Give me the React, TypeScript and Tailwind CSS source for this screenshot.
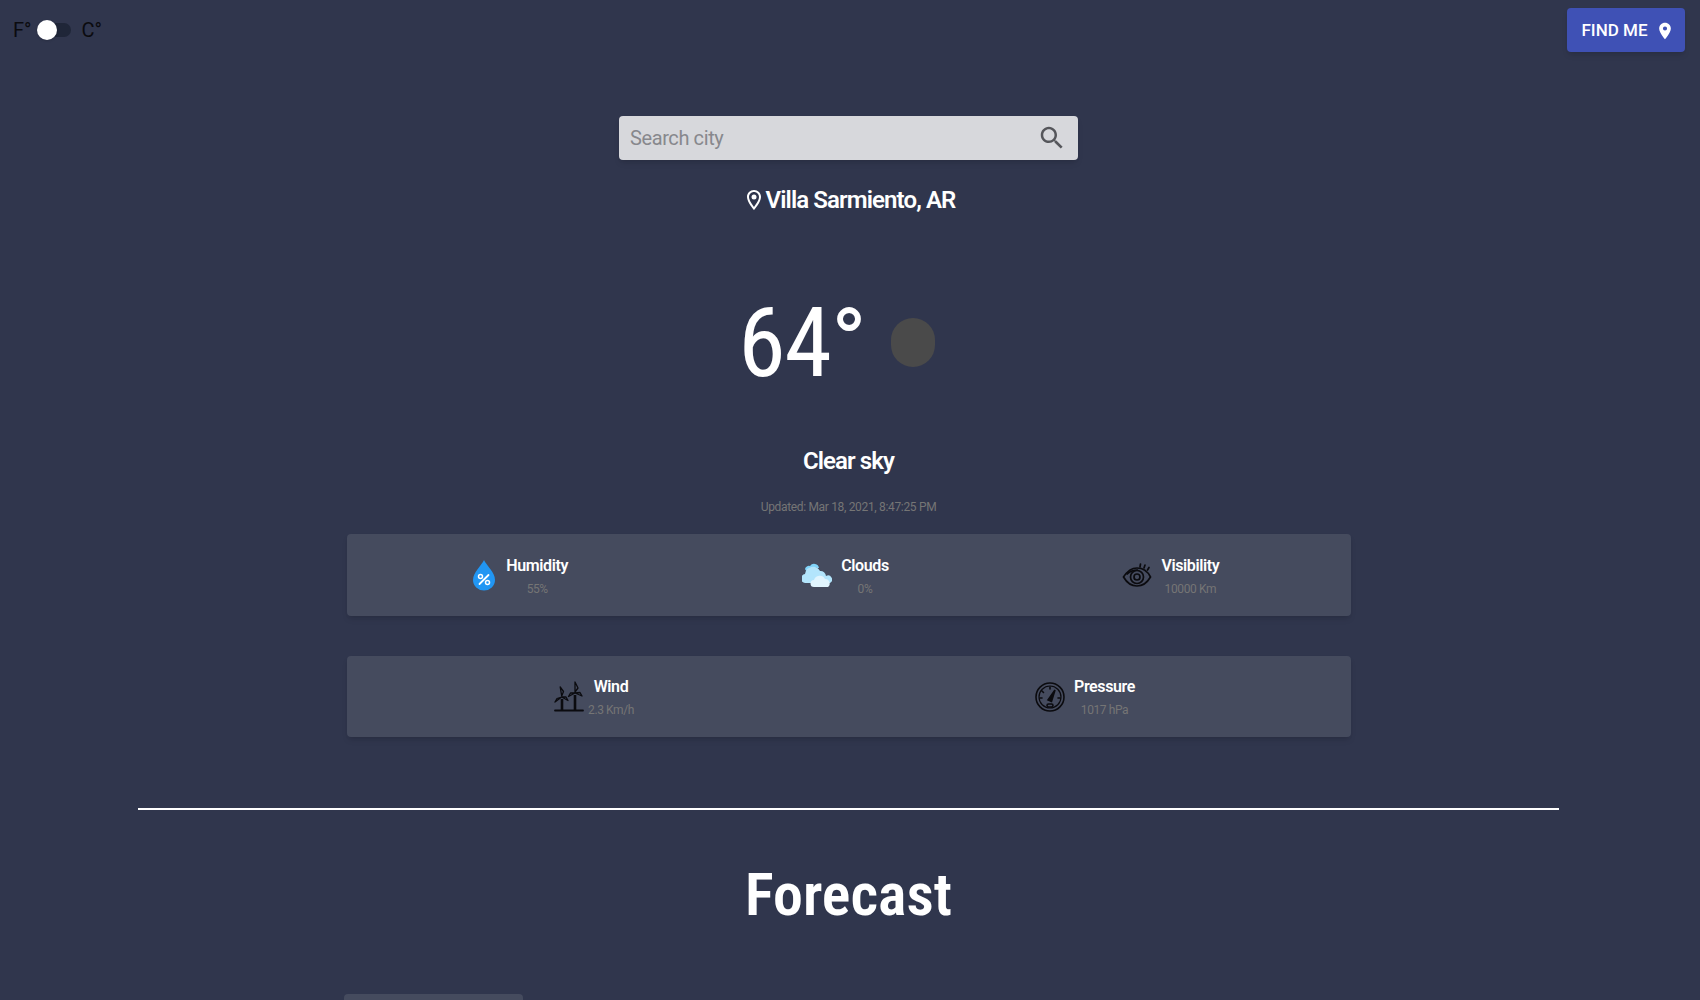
import type { ReactNode } from "react";

function DropIcon() {
  return (
    <svg viewBox="0 0 24 32" className="h-8 w-6">
      <path d="M12 1 C14 6 23 13 23 21 A11 10.5 0 0 1 1 21 C1 13 10 6 12 1Z" fill="#2196f3" />
      <path d="M7.5 25 L16.5 16" stroke="#fff" strokeWidth="1.8" strokeLinecap="round" />
      <circle cx="8.5" cy="17.5" r="2" fill="none" stroke="#fff" strokeWidth="1.5" />
      <circle cx="15.5" cy="23.5" r="2" fill="none" stroke="#fff" strokeWidth="1.5" />
    </svg>
  );
}

function CloudIcon() {
  return (
    <svg viewBox="0 0 30 28" className="h-7 w-[30px]">
      <path d="M3 8 a4 4 0 0 1 5-3 a5 5 0 0 1 9 2 h-2 a5 5 0 0 0-8 3 H5 a2.5 2.5 0 0 1-2-2Z" fill="#81d4fa" />
      <path d="M4 22 a4.5 4.5 0 0 1-1-9 a8 8 0 0 1 15-3 a5.5 5.5 0 0 1 6 5 a4 4 0 0 1 4 7Z" fill="#b3e5fc" />
      <path d="M12 26 a3.5 3.5 0 0 1 0-7 a6 6 0 0 1 11-1 a4.5 4.5 0 0 1 3 8Z" fill="#e1f5fe" />
    </svg>
  );
}

function EyeIcon() {
  return (
    <svg viewBox="0 0 30 28" className="h-7 w-[30px]" fill="none" stroke="#0b0b0f" strokeWidth="1.7" strokeLinecap="round">
      <path d="M1.5 16 C6 9 11 7 15 7 C20 7 25 9 28.5 16 C25 22 20 25 15 25 C10 25 5 22 1.5 16Z" />
      <path d="M5 13 C9 9.5 12 9 15.5 9" />
      <circle cx="15" cy="16" r="6.5" />
      <circle cx="15" cy="16" r="3" />
      <path d="M18 6 L18.5 3 M22 7 L23 4 M25.5 9 L27 6.5" />
    </svg>
  );
}

function WindIcon() {
  return (
    <svg viewBox="0 0 30 32" className="h-8 w-[30px]" fill="none" stroke="#0b0b0f" strokeWidth="1.3" strokeLinejoin="round" strokeLinecap="round">
      <path d="M1 29.5 H29" strokeWidth="1.8" />
      <path d="M8 29 V18 M21 29 V14" strokeWidth="2.6" strokeLinecap="butt" />
      <path d="M7.7 15 L6.2 6 L9.5 10.5 Z M7.7 16 L1 21 L3 17.5 Z M7.7 16 L14 19.5 L12 16 Z" />
      <path d="M21 11 L21 1 L24 7 Z M21 12 L14.5 15.5 L16.5 12 Z M21 12 L28 15 L26 11.5 Z" />
    </svg>
  );
}

function GaugeIcon() {
  return (
    <svg viewBox="0 0 30 30" className="h-[30px] w-[30px]" fill="none" stroke="#0b0b0f" strokeWidth="1.6" strokeLinecap="round">
      <circle cx="15" cy="15" r="14" />
      <circle cx="15" cy="15" r="11" strokeWidth="1.2" />
      <path d="M13 18 L20 8 L16.5 19.5 Z" fill="#0b0b0f" />
      <rect x="12" y="22" width="6" height="3" rx="1.5" />
      <path d="M15 5 V7 M7 9 L8.5 10.5 M5 16 H7 M25 16 H23" />
    </svg>
  );
}

function Stat({ icon, label, value, gap }: { icon: ReactNode; label: string; value: string; gap: string }) {
  return (
    <div className={`flex items-center justify-center ${gap}`}>
      {icon}
      <div className="flex flex-col items-center pt-[1px] tracking-[-0.4px]">
        <span className="text-[16px] font-semibold leading-[24px] text-white">{label}</span>
        <span className="mt-[2px] text-[12px] leading-[18px] text-[#757575]">{value}</span>
      </div>
    </div>
  );
}

export default function App() {
  return (
    <div className="h-screen overflow-hidden bg-[#30364d] font-['Roboto',sans-serif] text-white">
      <div className="flex items-start justify-between pl-[13px] pr-[15px] pt-2">
        <div className="flex items-center pt-[10px] text-[20px] leading-[24px] text-[#0b0b0f] [font-stretch:88%]">
          <span>F°</span>
          <span className="relative ml-[5px] mr-[11px] block h-[14px] w-[34px] rounded-full bg-[#1f2638]">
            <span className="absolute left-0 top-[-3px] h-5 w-5 rounded-full bg-white shadow" />
          </span>
          <span>C°</span>
        </div>
        <button className="flex h-11 w-[118px] items-center justify-center gap-[7px] rounded bg-[#3f51b5] pl-[4px] pt-[1px] text-[17px] font-medium text-white shadow-md">
          FIND ME
          <svg viewBox="0 0 24 24" className="h-[20px] w-[20px]" fill="#fff">
            <path d="M12 2C8.13 2 5 5.13 5 9c0 5.25 7 13 7 13s7-7.75 7-13c0-3.87-3.13-7-7-7zm0 9.5a2.5 2.5 0 1 1 0-5 2.5 2.5 0 0 1 0 5z" />
          </svg>
        </button>
      </div>

      <div className="pr-[3px]">
        <div className="mx-auto mt-[64px] flex h-11 w-[459px] items-center justify-between rounded bg-[#d7d8dc] pl-[11px] pr-[11px] shadow-md">
          <span className="text-[20px] tracking-[-0.4px] text-[#87888d]">Search city</span>
          <svg viewBox="0 0 24 24" className="h-[30px] w-[30px]" fill="#55565b">
            <path d="M15.5 14h-.79l-.28-.27C15.41 12.59 16 11.11 16 9.5 16 5.91 13.09 3 9.5 3S3 5.91 3 9.5 5.91 16 9.5 16c1.61 0 3.09-.59 4.23-1.57l.27.28v.79l5 4.99L20.49 19l-4.99-5zm-6 0C7.01 14 5 11.99 5 9.5S7.01 5 9.5 5 14 7.01 14 9.5 11.99 14 9.5 14z" />
          </svg>
        </div>

        <div className="mt-[24px] flex items-center justify-center text-[24px] font-semibold leading-[32px] tracking-[-0.9px]">
          <svg viewBox="0 0 24 24" className="h-6 w-6" fill="#fff">
            <path d="M12 2C8.13 2 5 5.13 5 9c0 5.25 7 13 7 13s7-7.75 7-13c0-3.87-3.13-7-7-7zM7 9c0-2.76 2.24-5 5-5s5 2.24 5 5c0 2.88-2.88 7.19-5 9.88C9.92 16.21 7 11.85 7 9z" />
            <circle cx="12" cy="9" r="2.5" />
          </svg>
          Villa Sarmiento, AR
        </div>

        <div className="mt-[71px] flex items-center justify-center gap-[25px] pr-[24px]">
          <span className="text-[96px] font-normal leading-[112px] tracking-[-1px] [font-stretch:78%]">64°</span>
          <span className="mt-[-2px] block h-[49px] w-[44px] rounded-full bg-[#4a4a4a]" />
        </div>

        <div className="mt-[46px] text-center text-[24px] font-semibold leading-[32px] tracking-[-0.9px]">Clear sky</div>
        <div className="mt-[21px] text-center text-[12px] leading-[18px] tracking-[-0.33px] text-[#757575]">Updated: Mar 18, 2021, 8:47:25 PM</div>

        <div className="mx-auto mt-[18px] grid h-[82px] w-[1004px] grid-cols-3 items-center rounded bg-[#454b5e] pl-[11px] pr-[17px] shadow-md">
          <Stat icon={<DropIcon />} label="Humidity" value="55%" gap="gap-[10px]" />
          <Stat icon={<CloudIcon />} label="Clouds" value="0%" gap="gap-[9px]" />
          <Stat icon={<EyeIcon />} label="Visibility" value="10000 Km" gap="gap-[9px]" />
        </div>

        <div className="mx-auto mt-[40px] grid h-[81px] w-[1004px] grid-cols-2 items-center rounded bg-[#454b5e] pl-[2px] pr-[20px] shadow-md">
          <Stat icon={<WindIcon />} label="Wind" value="2.3 Km/h" gap="gap-[4px]" />
          <Stat icon={<GaugeIcon />} label="Pressure" value="1017 hPa" gap="gap-[9px]" />
        </div>

        <hr className="mx-auto mt-[71px] w-[1421px] border-t-2 border-white" />

        <div className="mt-[49px] text-center text-[60px] font-semibold leading-[72px] [font-stretch:86%]">Forecast</div>

        <div className="ml-[344px] mt-[63px] h-20 w-[179px] rounded bg-[#454b5e]" />
      </div>
    </div>
  );
}
